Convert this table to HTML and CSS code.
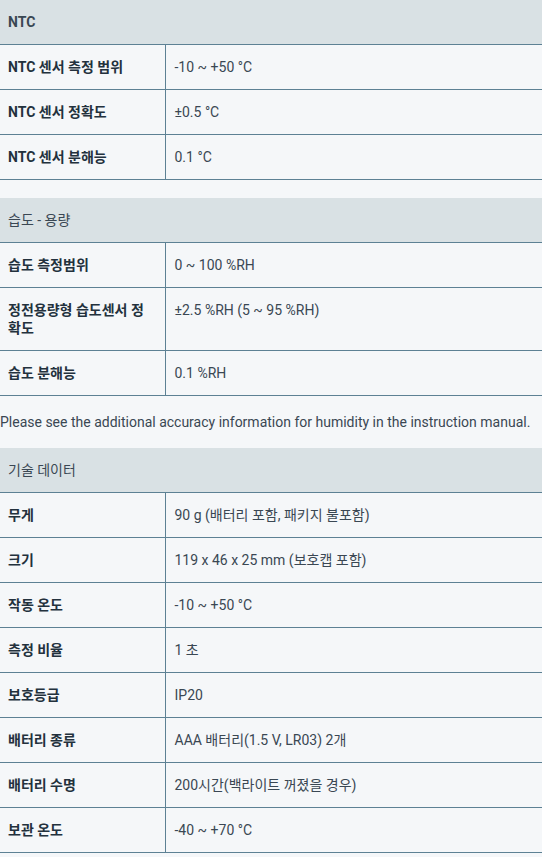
FILE: index.html
```html
<!DOCTYPE html>
<html lang="ko">
<head>
<meta charset="utf-8">
<link rel="stylesheet" href="styles.css">
</head>
<body>
<div class="specs">
  <table class="spec">
    <colgroup><col class="c-key"><col></colgroup>
    <tr class="head"><th colspan="2" class="strong">NTC</th></tr>
    <tr><td class="key">NTC 센서 측정 범위</td><td class="val">-10 ~ +50 °C</td></tr>
    <tr><td class="key">NTC 센서 정확도</td><td class="val">±0.5 °C</td></tr>
    <tr><td class="key">NTC 센서 분해능</td><td class="val">0.1 °C</td></tr>
  </table>

  <table class="spec">
    <colgroup><col class="c-key"><col></colgroup>
    <tr class="head"><th colspan="2">습도 - 용량</th></tr>
    <tr><td class="key">습도 측정범위</td><td class="val">0 ~ 100 %RH</td></tr>
    <tr><td class="key">정전용량형 습도센서 정확도</td><td class="val">±2.5 %RH (5 ~ 95 %RH)</td></tr>
    <tr><td class="key">습도 분해능</td><td class="val">0.1 %RH</td></tr>
  </table>

  <p class="note">Please see the additional accuracy information for humidity in the instruction manual.</p>

  <table class="spec">
    <colgroup><col class="c-key"><col></colgroup>
    <tr class="head"><th colspan="2">기술 데이터</th></tr>
    <tr><td class="key">무게</td><td class="val">90 g (배터리 포함, 패키지 불포함)</td></tr>
    <tr><td class="key">크기</td><td class="val">119 x 46 x 25 mm (보호캡 포함)</td></tr>
    <tr><td class="key">작동 온도</td><td class="val">-10 ~ +50 °C</td></tr>
    <tr><td class="key">측정 비율</td><td class="val">1 초</td></tr>
    <tr><td class="key">보호등급</td><td class="val">IP20</td></tr>
    <tr><td class="key">배터리 종류</td><td class="val">AAA 배터리(1.5 V, LR03) 2개</td></tr>
    <tr><td class="key">배터리 수명</td><td class="val">200시간(백라이트 꺼졌을 경우)</td></tr>
    <tr><td class="key">보관 온도</td><td class="val">-40 ~ +70 °C</td></tr>
  </table>
</div>
</body>
</html>
```

FILE: styles.css
```css
html, body {
  margin: 0;
  padding: 0;
  background: #f5f7f9;
}
body {
  font-family: Roboto, "Noto Sans CJK KR", sans-serif;
  font-size: 14px;
  line-height: 20px;
  color: #3a4753;
}
.specs {
  display: flex;
  flex-direction: column;
}
.spec {
  width: 100%;
  border-collapse: collapse;
  table-layout: fixed;
}
.spec + .spec {
  margin-top: 18px;
}
.c-key {
  width: 165px;
}
.head th {
  background: #d9e1e4;
  text-align: left;
  font-weight: 400;
  color: #3a4753;
  padding: 12px 8px;
}
.head th.strong {
  font-weight: 700;
}
.spec td {
  border-top: 1px solid #5d8194;
  border-bottom: 1px solid #5d8194;
  padding: 12px 8px;
  vertical-align: top;
}
.spec td.key {
  font-weight: 700;
  color: #23313d;
  border-right: 1px solid #5d8194;
  line-height: 18px;
  padding-top: 13px;
  padding-bottom: 13px;
}
.spec td.val {
  padding-left: 9px;
}
.note {
  margin: 16px 0;
  color: #3a4753;
}
```
